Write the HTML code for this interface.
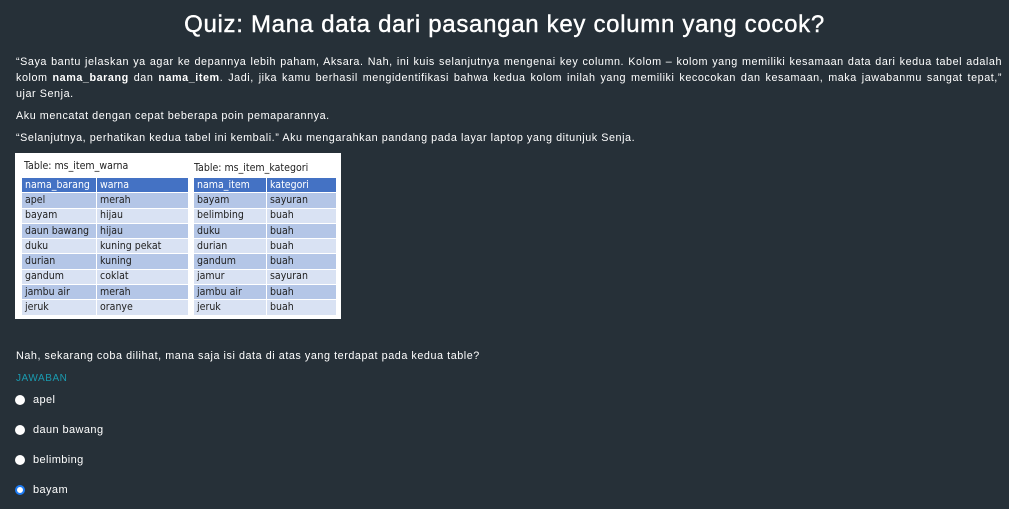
<!DOCTYPE html>
<html><head><meta charset="utf-8"><style>
body{margin:0;background:#263038;color:#fff;font-family:"Liberation Sans",sans-serif;width:1009px;height:509px;overflow:hidden}
h1{margin:0;position:absolute;top:11px;left:0;width:1009px;text-align:center;font-size:24px;font-weight:normal;letter-spacing:0.7px;-webkit-text-stroke:0.4px #fff}
.p{position:absolute;left:16px;width:986px;font-size:10.8px;line-height:16px;letter-spacing:0.55px}
.jl{display:block;text-align:justify;text-align-last:justify;white-space:nowrap}
.img{position:absolute;left:15px;top:153px;width:326px;height:166px;background:#fff;overflow:hidden}
table{position:absolute;border-collapse:collapse;font-size:10.5px;color:#222;font-family:"DejaVu Sans Condensed","Liberation Sans",sans-serif}
td{height:14.3px;padding:0 3px;border:1px solid #fff;white-space:nowrap;line-height:13px}
tr.h td{background:#4472c4;color:#fff}
tr.a td{background:#b4c6e7}
tr.b td{background:#d9e2f3}
.cap{position:absolute;font-size:10.5px;color:#222;font-family:"DejaVu Sans Condensed","Liberation Sans",sans-serif}
.opt{position:absolute;left:15px;font-size:11px;display:flex;align-items:center;letter-spacing:0.4px}
.r{width:10px;height:10px;border-radius:50%;background:#fff;margin-right:8px}
.sel{width:6px;height:6px;background:#fff;border:2px solid #1e7cf5}
</style></head><body>
<h1>Quiz: Mana data dari pasangan key column yang cocok?</h1>
<div class="p" style="top:54px"><span class="jl">“Saya bantu jelaskan ya agar ke depannya lebih paham, Aksara. Nah, ini kuis selanjutnya mengenai key column. Kolom – kolom yang memiliki kesamaan data dari kedua tabel adalah</span><span class="jl">kolom <b>nama_barang</b> dan <b>nama_item</b>. Jadi, jika kamu berhasil mengidentifikasi bahwa kedua kolom inilah yang memiliki kecocokan dan kesamaan, maka jawabanmu sangat tepat,”</span><span style="display:block">ujar Senja.</span></div>
<div class="p" style="top:108px">Aku mencatat dengan cepat beberapa poin pemaparannya.</div>
<div class="p" style="top:130px">“Selanjutnya, perhatikan kedua tabel ini kembali.” Aku mengarahkan pandang pada layar laptop yang ditunjuk Senja.</div>
<div class="img">
<div class="cap" style="left:9px;top:7px">Table: ms_item_warna</div>
<div class="cap" style="left:179px;top:9px">Table: ms_item_kategori</div>
<table style="left:6px;top:24px;width:168px">
<tr class="h"><td style="width:68px">nama_barang</td><td>warna</td></tr>
<tr class="a"><td>apel</td><td>merah</td></tr>
<tr class="b"><td>bayam</td><td>hijau</td></tr>
<tr class="a"><td>daun bawang</td><td>hijau</td></tr>
<tr class="b"><td>duku</td><td>kuning pekat</td></tr>
<tr class="a"><td>durian</td><td>kuning</td></tr>
<tr class="b"><td>gandum</td><td>coklat</td></tr>
<tr class="a"><td>jambu air</td><td>merah</td></tr>
<tr class="b"><td>jeruk</td><td>oranye</td></tr>
</table>
<table style="left:178px;top:24px;width:144px">
<tr class="h"><td style="width:66px">nama_item</td><td>kategori</td></tr>
<tr class="a"><td>bayam</td><td>sayuran</td></tr>
<tr class="b"><td>belimbing</td><td>buah</td></tr>
<tr class="a"><td>duku</td><td>buah</td></tr>
<tr class="b"><td>durian</td><td>buah</td></tr>
<tr class="a"><td>gandum</td><td>buah</td></tr>
<tr class="b"><td>jamur</td><td>sayuran</td></tr>
<tr class="a"><td>jambu air</td><td>buah</td></tr>
<tr class="b"><td>jeruk</td><td>buah</td></tr>
</table>
</div>
<div class="p" style="top:348px">Nah, sekarang coba dilihat, mana saja isi data di atas yang terdapat pada kedua table?</div>
<div class="p" style="top:371px;color:#1a9bb0;font-size:10px">JAWABAN</div>
<div class="opt" style="top:394px"><span class="r"></span>apel</div>
<div class="opt" style="top:424px"><span class="r"></span>daun bawang</div>
<div class="opt" style="top:454px"><span class="r"></span>belimbing</div>
<div class="opt" style="top:484px"><span class="r sel"></span>bayam</div>
</body></html>
